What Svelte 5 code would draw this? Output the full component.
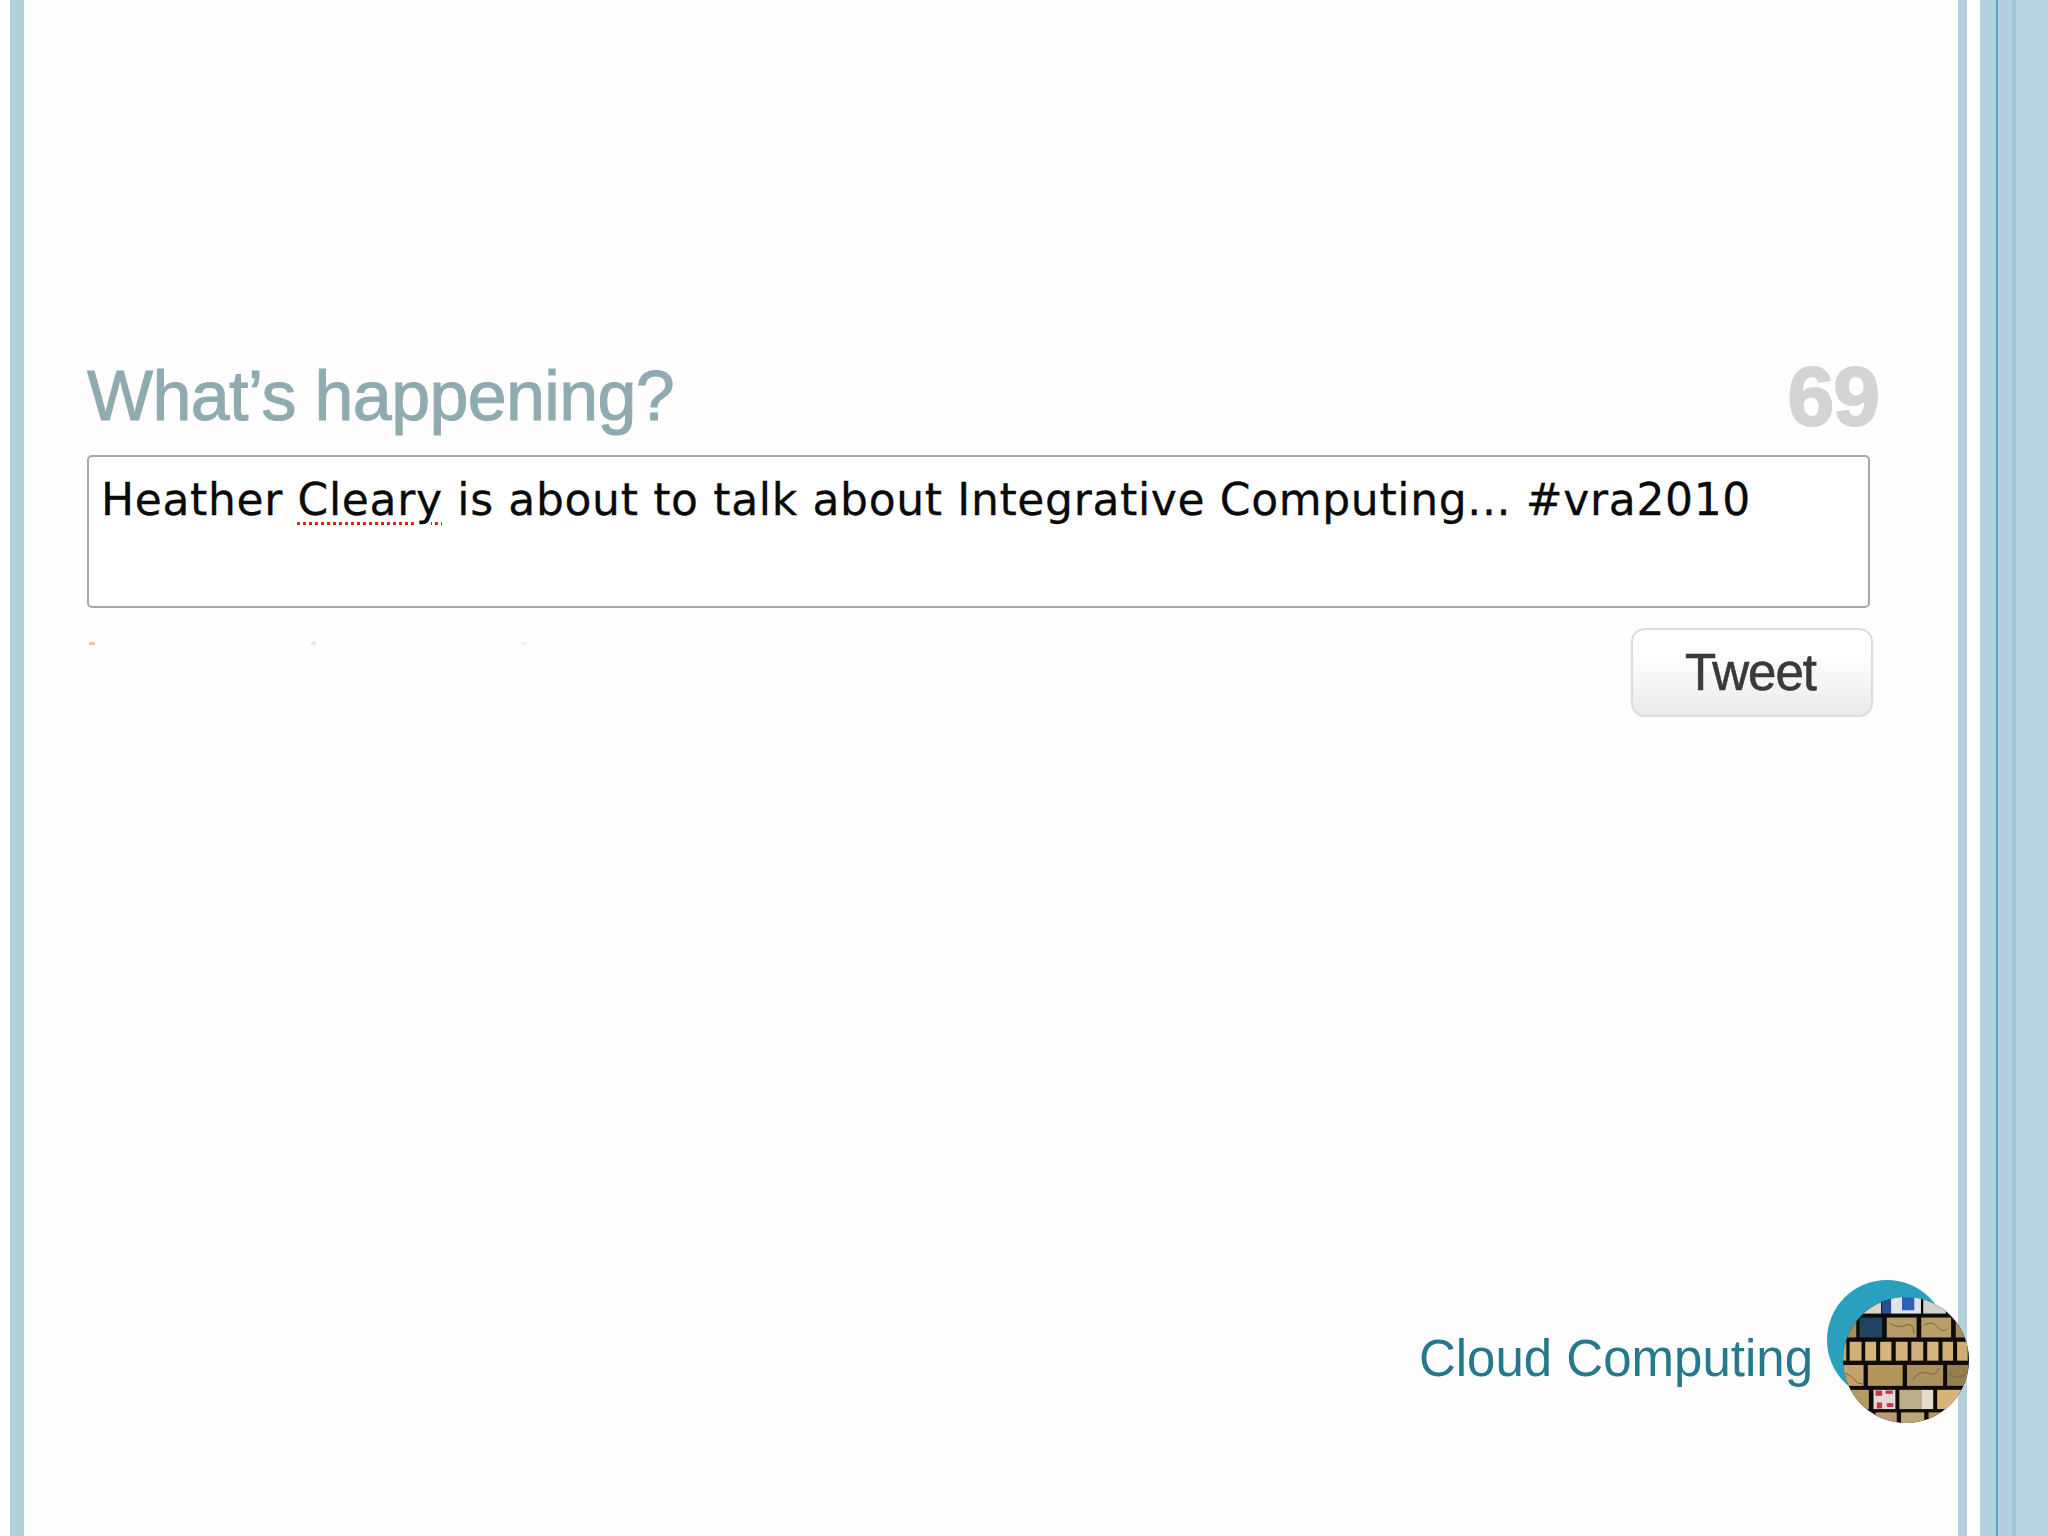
<script>
  const rows = [
    [[190,110,55,50,'#d9d4c6'],[248,110,27,50,'#26509a'],[275,110,90,50,'#dfe3ea'],[372,110,68,50,'#d0d2cc']],
    [[130,172,40,60,'#a98c58'],[180,172,68,60,'#1f4560'],[262,172,90,60,'#b59c68'],[366,172,90,60,'#b89e68'],[470,172,40,60,'#ad8a5a']],
    [[130,245,10,57,'#c8a96c'],[150,245,36,57,'#d2b176'],[197,245,33,57,'#d4b47a'],[242,245,34,57,'#d6b67c'],[289,245,36,57,'#d2b278'],[336,245,36,57,'#d0b07a'],[384,245,34,57,'#d6b67c'],[430,245,32,57,'#d2b176'],[474,245,32,57,'#d0ae72']],
    [[130,315,62,63,'#c2a36a'],[205,315,105,63,'#b4965a'],[323,315,109,63,'#ab9260'],[444,315,66,63,'#94804e']],
    [[150,390,58,58,'#b39a62'],[222,390,66,58,'#e3dcd6'],[300,390,66,58,'#bfac88'],[366,390,36,58,'#e4dcc4'],[414,390,76,58,'#d8b47a']],
    [[228,458,64,32,'#b89c76'],[305,458,70,32,'#bda57a'],[388,458,42,32,'#b89866']]
  ];
  const reds = [[228,392,20,16],[258,392,22,10],[232,428,16,18],[262,430,20,12]];
  const lines = [
    'M135 340 q20 5 30 20 t25 12',
    'M340 360 q20 -30 45 -20 t35 -15',
    'M270 190 q30 15 50 5 t25 25',
    'M375 195 q25 -15 40 5 t30 5',
    'M450 340 q20 20 50 5'
  ];
</script>

<div class="slide">
  <div class="edge-left"></div>
  <main class="content">
    <section class="composer">
      <header class="composer-head">
        <h1>What’s happening?</h1>
        <span class="count">69</span>
      </header>
      <div class="input">Heather <span class="misspelled">Cleary</span> is about to talk about Integrative Computing... #vra2010</div>
      <div class="actions">
        <div class="specks"><i class="orange"></i><i class="grey"></i><i class="pale"></i></div>
        <button type="button">Tweet</button>
      </div>
    </section>
    <footer class="footer">
      <span class="title">Cloud Computing</span>
      <div class="logo">
        <div class="disc"></div>
        <svg class="mosaic" viewBox="130 110 380 380" aria-hidden="true">
          <defs><clipPath id="round"><circle cx="320" cy="300" r="190" /></clipPath></defs>
          <g clip-path="url(#round)">
            <rect x="130" y="110" width="380" height="380" fill="#0d0b08" />
            {#each rows as row}
              {#each row as [x, y, w, h, fill]}
                <rect {x} {y} width={w} height={h} {fill} />
              {/each}
            {/each}
            {#each reds as [x, y, w, h]}
              <rect {x} {y} width={w} height={h} fill="#c23a4a" />
            {/each}
            <rect x="308" y="110" width="37" height="40" fill="#2d62b8" />
            {#each lines as d}
              <path {d} fill="none" stroke="#7d6238" stroke-width="3" />
            {/each}
          </g>
        </svg>
      </div>
    </footer>
  </main>
  <div class="edge-right">
    <div class="band thin"></div>
    <div class="gap"></div>
    <div class="band wide"></div>
    <div class="band rule"></div>
    <div class="band tint"></div>
    <div class="band deep"></div>
    <div class="band rest"></div>
  </div>
</div>

<style>
  :global(body) {
    margin: 0;
    background: #fefefe;
  }
  .slide {
    display: flex;
    width: 2048px;
    height: 1536px;
    overflow: hidden;
    background: #fefefe;
    font-family: "Liberation Sans", Arial, sans-serif;
  }
  .edge-left {
    flex: none;
    width: 14px;
    margin-left: 10px;
    background: #b3d1dd;
  }
  .content {
    flex: 1;
    min-width: 0;
    display: flex;
    flex-direction: column;
    padding: 355px 0 0 63px;
  }
  .composer {
    width: 1804px;
    display: flex;
    flex-direction: column;
  }
  .composer-head {
    display: flex;
    justify-content: space-between;
    align-items: center;
    height: 82px;
    margin-bottom: 18px;
    padding-right: 12px;
  }
  h1 {
    margin: 0;
    font-size: 70px;
    line-height: 82px;
    font-weight: 400;
    letter-spacing: -0.65px;
    color: #8eabb0;
    -webkit-text-stroke: 1px #8eabb0;
    filter: blur(0.5px);
  }
  .count {
    font-size: 84px;
    line-height: 82px;
    font-weight: 700;
    letter-spacing: -1px;
    color: #d4d4d4;
    -webkit-text-stroke: 2px #d4d4d4;
    filter: blur(0.7px);
  }
  .input {
    box-sizing: border-box;
    width: 1783px;
    height: 153px;
    padding: 15px 0 0 12px;
    border: 2px solid #a8a8aa;
    border-radius: 5px;
    background: #fff;
    font-family: "DejaVu Sans", sans-serif;
    font-size: 44px;
    line-height: 56px;
    letter-spacing: 0.65px;
    color: #0a0a0a;
    -webkit-text-stroke: 0.3px #0a0a0a;
    white-space: nowrap;
  }
  .misspelled {
    text-decoration: underline dotted #e02020 3px;
    text-underline-offset: 7px;
  }
  .actions {
    display: flex;
    justify-content: space-between;
    align-items: flex-start;
    width: 1786px;
    margin-top: 20px;
  }
  .specks {
    display: flex;
    margin-top: 14px;
    margin-left: 2px;
  }
  .specks i {
    display: block;
    height: 3px;
  }
  .orange { width: 6px; background: #ecc8a8; }
  .grey { width: 5px; margin-left: 216px; background: #e8e8ea; }
  .pale { width: 5px; margin-left: 205px; background: #f2f2f2; }
  button {
    box-sizing: border-box;
    width: 242px;
    height: 89px;
    padding: 0 3px 0 0;
    border: 2px solid #dcdcde;
    border-radius: 14px;
    background: linear-gradient(#ffffff 30%, #e9e9e9);
    font-family: "Liberation Sans", Arial, sans-serif;
    font-size: 51px;
    letter-spacing: -1px;
    color: #3a3a3a;
    -webkit-text-stroke: 0.6px #3a3a3a;
  }
  .footer {
    display: flex;
    justify-content: flex-end;
    align-items: flex-start;
    margin-top: auto;
    margin-bottom: 113px;
    margin-right: -11px;
  }
  .title {
    margin-top: 49px;
    margin-right: 14px;
    font-size: 51px;
    line-height: 60px;
    color: #26788c;
  }
  .logo {
    position: relative;
    z-index: 1;
    flex: none;
    width: 142px;
    height: 143px;
  }
  .disc {
    width: 120px;
    height: 120px;
    border-radius: 50%;
    background: #2aa0bf;
  }
  .mosaic {
    position: absolute;
    left: 16px;
    top: 17px;
    width: 126px;
    height: 126px;
    filter: blur(0.5px);
  }
  .edge-right {
    flex: none;
    display: flex;
    width: 90px;
  }
  .band { flex: none; }
  .thin { width: 9px; background: #b3d1dd; }
  .gap { width: 13px; }
  .wide { width: 16px; background: #b4d2de; }
  .rule { width: 2px; background: #4ba6c8; }
  .tint { width: 14px; background: #b4d0e0; }
  .deep { width: 4px; background: #a0c6dc; }
  .rest { flex: 1; background: #b6d3df; }
</style>
